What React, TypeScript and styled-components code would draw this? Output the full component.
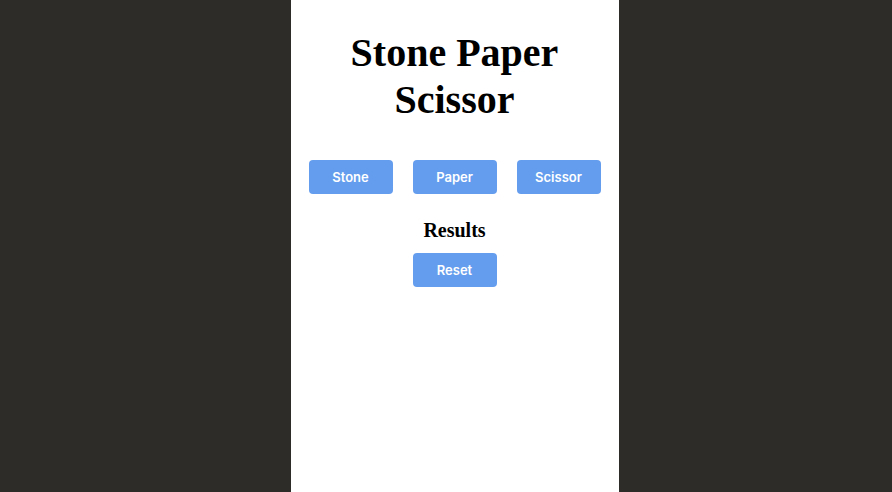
import React from "react";
import styled, { createGlobalStyle } from "styled-components";

const Global = createGlobalStyle`
  html, body { margin: 0; padding: 0; height: 100%; }
  body { background: #2d2c29; }
  #root { height: 100%; }
`;

const Page = styled.div`
  display: flex;
  justify-content: center;
  min-height: 492px;
  background: #2d2c29;
  padding-left: 17px;
`;

const Panel = styled.main`
  width: 328px;
  background: #ffffff;
  display: flex;
  flex-direction: column;
  align-items: center;
  padding-top: 29px;
  box-sizing: border-box;
`;

const Title = styled.h1`
  margin: 0;
  font-family: "Liberation Serif", "Times New Roman", serif;
  font-weight: 700;
  font-size: 40px;
  line-height: 47px;
  text-align: center;
  color: #000;
  width: 240px;
`;

const Choices = styled.div`
  display: flex;
  gap: 20px;
  margin-top: 37px;
`;

const Button = styled.button`
  width: 84px;
  height: 34px;
  border: none;
  border-radius: 4px;
  background: #649ded;
  color: #fff;
  font-family: Inter, "Noto Sans", sans-serif;
  font-weight: 600;
  font-size: 13px;
  cursor: pointer;
  padding: 0;
`;

const Results = styled.h2`
  margin: 25px 0 0;
  font-family: "Liberation Serif", "Times New Roman", serif;
  font-weight: 700;
  font-size: 20px;
  line-height: 23px;
  color: #000;
`;

const ResetRow = styled.div`
  margin-top: 11px;
`;

export default function App() {
  return (
    <>
      <Global />
      <Page>
        <Panel>
          <Title>Stone Paper Scissor</Title>
          <Choices>
            <Button>Stone</Button>
            <Button>Paper</Button>
            <Button>Scissor</Button>
          </Choices>
          <Results>Results</Results>
          <ResetRow>
            <Button>Reset</Button>
          </ResetRow>
        </Panel>
      </Page>
    </>
  );
}
